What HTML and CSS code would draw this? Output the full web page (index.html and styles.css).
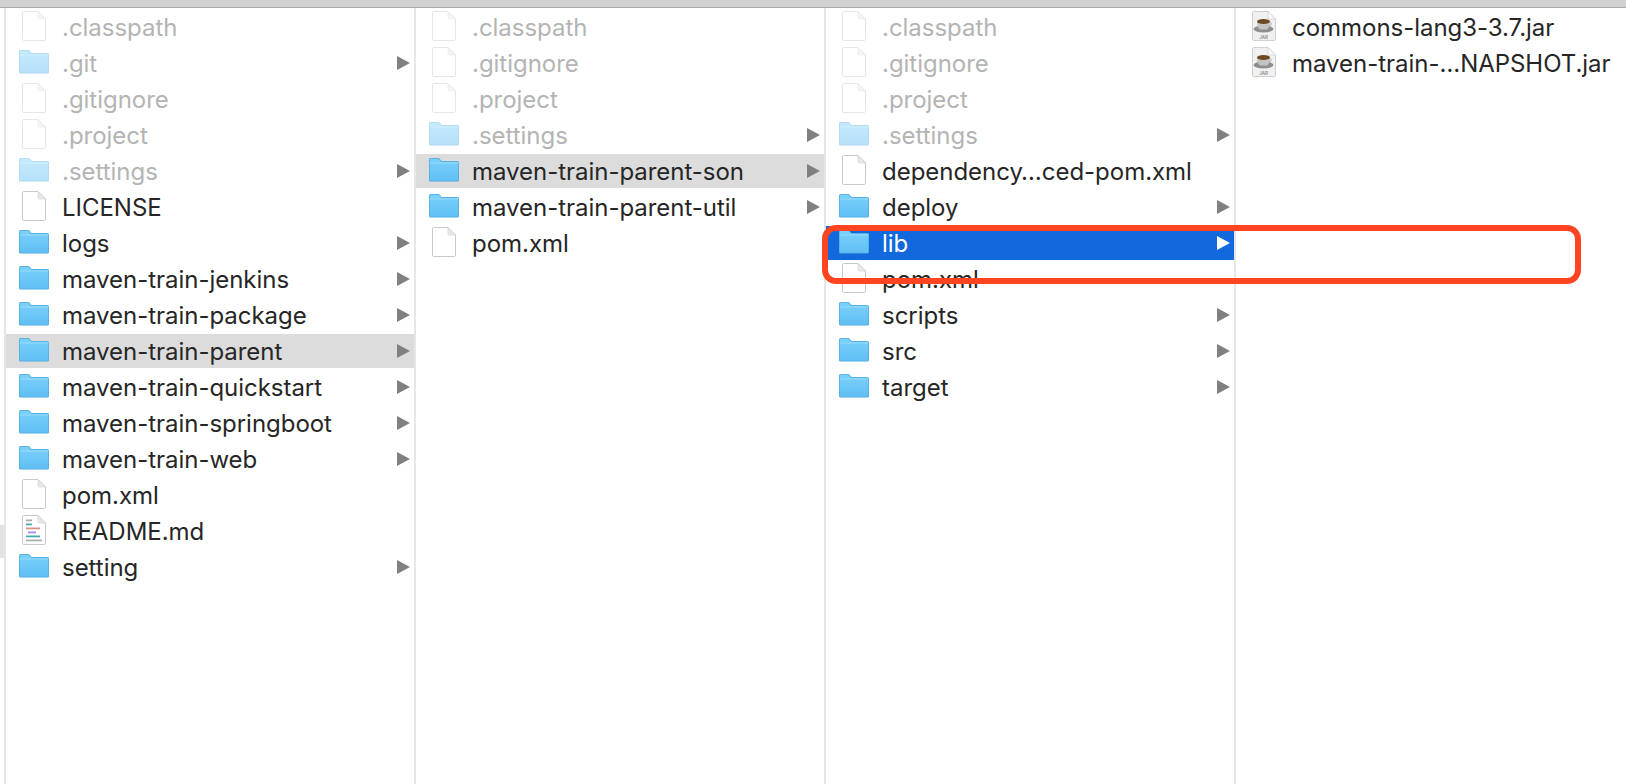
FILE: index.html
```html
<!DOCTYPE html>
<html lang="en">
<head>
<meta charset="utf-8">
<title>Finder</title>
<link rel="stylesheet" href="styles.css">
</head>
<body>
<svg class="defs" width="0" height="0" aria-hidden="true">
  <defs>
    <linearGradient id="fg" x1="0" y1="0" x2="0" y2="1"><stop offset="0" stop-color="#7cd0fb"/><stop offset="1" stop-color="#60bff5"/></linearGradient>
    <symbol id="folder" viewBox="0 0 30 24">
      <path d="M1.500 23.500A1.500 1.500 0 0 1 0 22V1.500A1.500 1.500 0 0 1 1.500 0h7.300c1 0 1.500.4 2.200 1.200L12.600 3H28.500A1.500 1.500 0 0 1 30 4.500V22a1.500 1.500 0 0 1-1.500 1.500z" fill="#4fa9dd"/>
      <path d="M1.500 22.700A.8.8 0 0 1 .7 22V1.500A.8.8 0 0 1 1.500.7h7.300c.7 0 1.100.3 1.700 1L12.300 3.700H28.500a.8.8 0 0 1 .8.8V22a.8.8 0 0 1-.8.7z" fill="url(#fg)"/>
      <path d="M.7 5h28.600" stroke="#96dcfd" stroke-width="1"/>
    </symbol>
    <symbol id="file" viewBox="0 0 24 30">
      <path d="M1.500.5H16L23.500 8V28A1.500 1.500 0 0 1 22 29.500H2A1.500 1.500 0 0 1 .5 28V2A1.500 1.500 0 0 1 1.500.5z" fill="#fff" stroke="#c9c9c9"/>
      <path d="M16 .5V6.500A1.500 1.500 0 0 0 17.500 8H23.500z" fill="#e9e9e9" stroke="#cfcfcf" stroke-width=".6"/>
    </symbol>
    <symbol id="readme" viewBox="0 0 24 30">
      <use href="#file" width="24" height="30"/>
      <rect x="4" y="4.500" width="6" height="1.800" fill="#aaa"/>
      <rect x="4" y="8.500" width="6" height="1.800" fill="#47a9b5"/>
      <rect x="4" y="12.500" width="14" height="1.800" fill="#dd9090"/>
      <rect x="6" y="16.500" width="8" height="1.800" fill="#a98bf0"/>
      <rect x="4" y="20.500" width="14" height="1.800" fill="#47a9b5"/>
      <rect x="4" y="24.500" width="16" height="1.800" fill="#b0b0b0"/>
    </symbol>
    <symbol id="jar" viewBox="0 0 24 30">
      <path d="M1.500.5H16L23.500 8V28A1.500 1.500 0 0 1 22 29.500H2A1.500 1.500 0 0 1 .5 28V2A1.500 1.500 0 0 1 1.500.5z" fill="#f1f1f1" stroke="#d0d0d0"/>
      <path d="M16 .5V6.500A1.500 1.500 0 0 0 17.500 8H23.500z" fill="#fafafa" stroke="#cfcfcf" stroke-width=".6"/>
      <ellipse cx="11.500" cy="18" rx="10" ry="3.500" fill="#8f8f8f"/>
      <path d="M5 10.500h13c0 4.500-1.500 7.500-3.500 8h-6C6.500 18 5 15 5 10.500z" fill="#c4c4c4"/>
      <ellipse cx="11.500" cy="10.500" rx="6.500" ry="2.400" fill="#6e4a22"/>
      <path d="M17.800 11.500c2 0 2 3-1 3.500" fill="none" stroke="#a8a8a8"/>
      <text class="jar-label" x="11.500" y="27.500">JAR</text>
    </symbol>
  </defs>
</svg>

<div class="topbar"></div>
<main class="browser">
  <div class="gutter"><span class="gutter-mark"></span></div>

  <section class="col">
    <div class="row dim"><svg class="ico file"><use href="#file"/></svg><span class="name">.classpath</span></div>
    <div class="row dim"><svg class="ico folder"><use href="#folder"/></svg><span class="name">.git</span><i class="arrow"></i></div>
    <div class="row dim"><svg class="ico file"><use href="#file"/></svg><span class="name">.gitignore</span></div>
    <div class="row dim"><svg class="ico file"><use href="#file"/></svg><span class="name">.project</span></div>
    <div class="row dim"><svg class="ico folder"><use href="#folder"/></svg><span class="name">.settings</span><i class="arrow"></i></div>
    <div class="row"><svg class="ico file"><use href="#file"/></svg><span class="name">LICENSE</span></div>
    <div class="row"><svg class="ico folder"><use href="#folder"/></svg><span class="name">logs</span><i class="arrow"></i></div>
    <div class="row"><svg class="ico folder"><use href="#folder"/></svg><span class="name">maven-train-jenkins</span><i class="arrow"></i></div>
    <div class="row"><svg class="ico folder"><use href="#folder"/></svg><span class="name">maven-train-package</span><i class="arrow"></i></div>
    <div class="row open"><svg class="ico folder"><use href="#folder"/></svg><span class="name">maven-train-parent</span><i class="arrow"></i></div>
    <div class="row"><svg class="ico folder"><use href="#folder"/></svg><span class="name">maven-train-quickstart</span><i class="arrow"></i></div>
    <div class="row"><svg class="ico folder"><use href="#folder"/></svg><span class="name">maven-train-springboot</span><i class="arrow"></i></div>
    <div class="row"><svg class="ico folder"><use href="#folder"/></svg><span class="name">maven-train-web</span><i class="arrow"></i></div>
    <div class="row"><svg class="ico file"><use href="#file"/></svg><span class="name">pom.xml</span></div>
    <div class="row"><svg class="ico file"><use href="#readme"/></svg><span class="name">README.md</span></div>
    <div class="row"><svg class="ico folder"><use href="#folder"/></svg><span class="name">setting</span><i class="arrow"></i></div>
  </section>

  <section class="col">
    <div class="row dim"><svg class="ico file"><use href="#file"/></svg><span class="name">.classpath</span></div>
    <div class="row dim"><svg class="ico file"><use href="#file"/></svg><span class="name">.gitignore</span></div>
    <div class="row dim"><svg class="ico file"><use href="#file"/></svg><span class="name">.project</span></div>
    <div class="row dim"><svg class="ico folder"><use href="#folder"/></svg><span class="name">.settings</span><i class="arrow"></i></div>
    <div class="row open"><svg class="ico folder"><use href="#folder"/></svg><span class="name">maven-train-parent-son</span><i class="arrow"></i></div>
    <div class="row"><svg class="ico folder"><use href="#folder"/></svg><span class="name">maven-train-parent-util</span><i class="arrow"></i></div>
    <div class="row"><svg class="ico file"><use href="#file"/></svg><span class="name">pom.xml</span></div>
  </section>

  <section class="col">
    <div class="row dim"><svg class="ico file"><use href="#file"/></svg><span class="name">.classpath</span></div>
    <div class="row dim"><svg class="ico file"><use href="#file"/></svg><span class="name">.gitignore</span></div>
    <div class="row dim"><svg class="ico file"><use href="#file"/></svg><span class="name">.project</span></div>
    <div class="row dim"><svg class="ico folder"><use href="#folder"/></svg><span class="name">.settings</span><i class="arrow"></i></div>
    <div class="row"><svg class="ico file"><use href="#file"/></svg><span class="name">dependency…ced-pom.xml</span></div>
    <div class="row"><svg class="ico folder"><use href="#folder"/></svg><span class="name">deploy</span><i class="arrow"></i></div>
    <div class="row active"><svg class="ico folder"><use href="#folder"/></svg><span class="name">lib</span><i class="arrow"></i></div>
    <div class="row"><svg class="ico file"><use href="#file"/></svg><span class="name">pom.xml</span></div>
    <div class="row"><svg class="ico folder"><use href="#folder"/></svg><span class="name">scripts</span><i class="arrow"></i></div>
    <div class="row"><svg class="ico folder"><use href="#folder"/></svg><span class="name">src</span><i class="arrow"></i></div>
    <div class="row"><svg class="ico folder"><use href="#folder"/></svg><span class="name">target</span><i class="arrow"></i></div>
  </section>

  <section class="col last">
    <div class="row"><svg class="ico file"><use href="#jar"/></svg><span class="name">commons-lang3-3.7.jar</span></div>
    <div class="row"><svg class="ico file"><use href="#jar"/></svg><span class="name">maven-train-…NAPSHOT.jar</span></div>
  </section>
</main>
<div class="callout"></div>
</body>
</html>
```

FILE: styles.css
```css
html, body {
  margin: 0;
  height: 100%;
  background: #fff;
  overflow: hidden;
}
body {
  font-family: Inter, "Liberation Sans", sans-serif;
  color: #262626;
}
.defs {
  position: absolute;
}
.topbar {
  height: 7px;
  background: #d2d2d2;
  border-bottom: 1px solid #a9a9a9;
}
.browser {
  display: flex;
  height: 776px;
}
.gutter {
  width: 4px;
  padding-top: 517px;
  flex: none;
}
.gutter-mark {
  display: block;
  width: 4px;
  height: 33px;
  background: #e3e3e3;
}
.col {
  width: 408px;
  flex: none;
  padding-top: 2px;
  border-left: 2px solid #e6e6e6;
  display: flex;
  flex-direction: column;
  gap: 2px;
}
.col.last {
  flex: 1;
}
.row {
  height: 34px;
  display: flex;
  align-items: center;
  padding: 0 4px 0 14px;
  font-size: 24px;
  line-height: 34px;
  letter-spacing: -.03px;
  white-space: nowrap;
}
.name {
  margin-top: 2px;
}
.ico {
  flex: none;
}
.ico.file {
  width: 24px;
  height: 30px;
  margin: 0 16px 2px 2px;
}
.ico.folder {
  width: 30px;
  height: 24px;
  margin: 0 13px 2px -1px;
}
.jar-label {
  font-size: 4.500px;
  font-weight: 600;
  text-anchor: middle;
  fill: #8a8a8a;
}
.arrow {
  margin-left: auto;
  width: 0;
  height: 0;
  border-left: 13px solid #808080;
  border-top: 7px solid transparent;
  border-bottom: 7px solid transparent;
}
.dim .name {
  color: #b4b4b4;
}
.dim .ico {
  opacity: .45;
}
.open {
  background: #dcdcdc;
}
.active {
  background: #1169dd;
  color: #fff;
}
.active .arrow {
  border-left-color: #fff;
}
.callout {
  position: absolute;
  left: 822px;
  top: 225px;
  width: 747px;
  height: 47px;
  border: 6px solid #fe4420;
  border-radius: 14px;
}
```
